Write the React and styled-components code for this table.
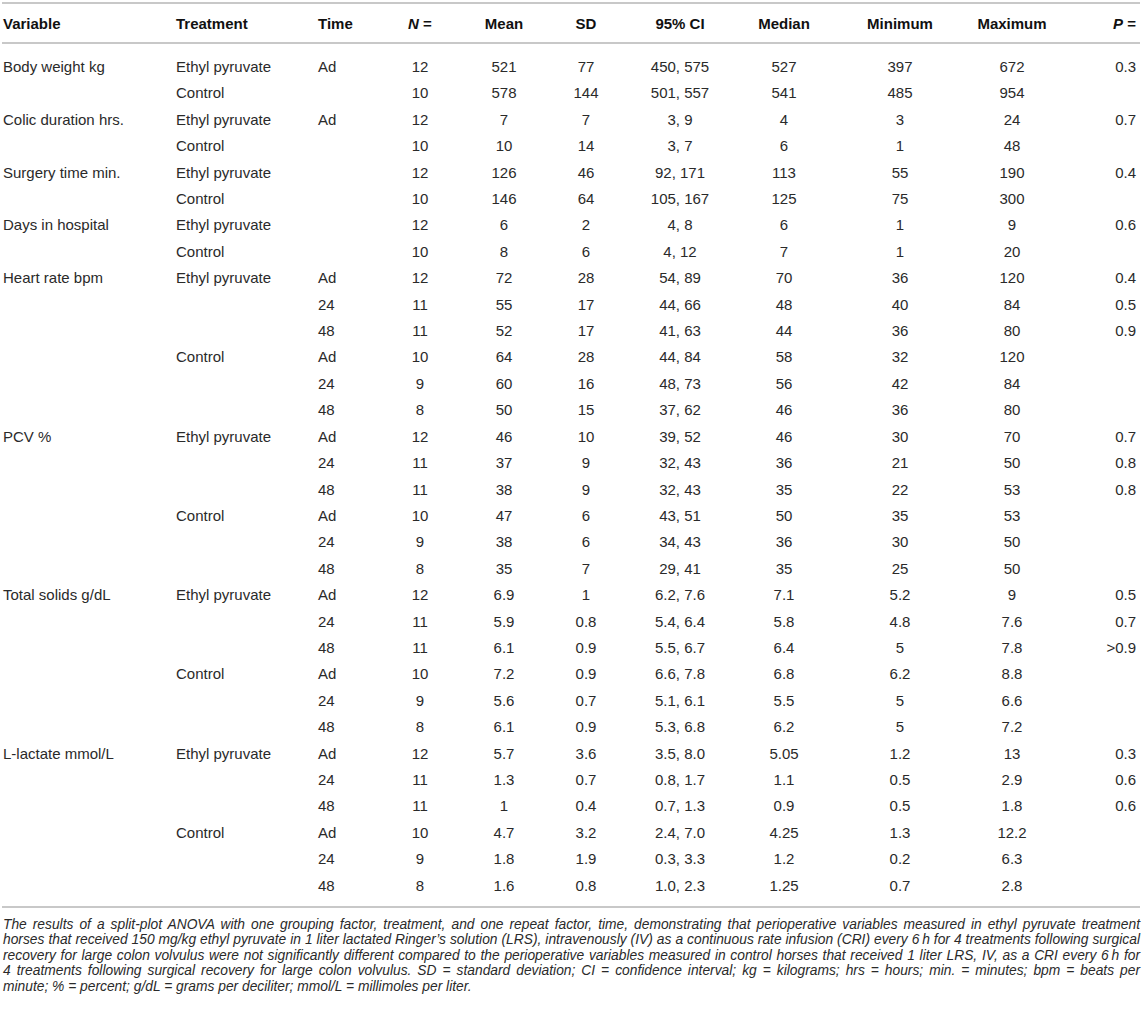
import React from 'react';
import styled, { createGlobalStyle } from 'styled-components';

const GlobalStyle = createGlobalStyle`
  html, body {
    margin: 0;
    padding: 0;
    background: #fff;
  }
`;

const Page = styled.div`
  width: 1138px;
  padding: 2px 0 0 2px;
  font-family: "Liberation Sans", Arial, sans-serif;
  color: #2a2a2a;
`;

const Table = styled.table`
  width: 1138px;
  border-collapse: collapse;
  table-layout: fixed;
  font-size: 15px;
`;

const HeadRow = styled.tr`
  border-top: 2px solid #c8c8c8;
  border-bottom: 2px solid #c8c8c8;
`;

const Th = styled.th`
  height: 38px;
  padding: 0 ${p => p.$pr || 0}px 0 ${p => p.$pl || 0}px;
  text-align: ${p => p.$align || 'center'};
  font-weight: bold;
  color: #111;
  white-space: nowrap;
`;

const Body = styled.tbody`
  border-bottom: 2px solid #c8c8c8;

  tr:first-child td {
    padding-top: 10px;
  }
  tr:last-child td {
    padding-bottom: 7px;
  }
`;

const Td = styled.td`
  line-height: 26.4px;
  padding: 0 ${p => p.$pr || 0}px 0 ${p => p.$pl || 0}px;
  text-align: ${p => p.$align || 'center'};
  white-space: nowrap;
  vertical-align: top;
`;

const Caption = styled.div`
  width: 1137px;
  padding: 9px 0 0 1px;
  font-size: 13.8px;
  line-height: 15.4px;
  font-style: italic;
  color: #2a2a2a;
`;

const CaptionLine = styled.div`
  text-align: left;
  text-align-last: ${p => (p.$justify ? 'justify' : 'left')};
`;

const cols = [
  { w: 172, align: 'left', pl: 1 },
  { w: 142, align: 'left', pl: 2 },
  { w: 54, align: 'left', pl: 2 },
  { w: 100 },
  { w: 68 },
  { w: 96 },
  { w: 92 },
  { w: 116 },
  { w: 116 },
  { w: 108 },
  { w: 74, align: 'right', pr: 4 },
];

const headers = [
  'Variable',
  'Treatment',
  'Time',
  <><i>N</i> =</>,
  'Mean',
  'SD',
  '95% CI',
  'Median',
  'Minimum',
  'Maximum',
  <><i>P</i> =</>,
];

const rows = [
  ['Body weight kg', 'Ethyl pyruvate', 'Ad', '12', '521', '77', '450, 575', '527', '397', '672', '0.3'],
  ['', 'Control', '', '10', '578', '144', '501, 557', '541', '485', '954', ''],
  ['Colic duration hrs.', 'Ethyl pyruvate', 'Ad', '12', '7', '7', '3, 9', '4', '3', '24', '0.7'],
  ['', 'Control', '', '10', '10', '14', '3, 7', '6', '1', '48', ''],
  ['Surgery time min.', 'Ethyl pyruvate', '', '12', '126', '46', '92, 171', '113', '55', '190', '0.4'],
  ['', 'Control', '', '10', '146', '64', '105, 167', '125', '75', '300', ''],
  ['Days in hospital', 'Ethyl pyruvate', '', '12', '6', '2', '4, 8', '6', '1', '9', '0.6'],
  ['', 'Control', '', '10', '8', '6', '4, 12', '7', '1', '20', ''],
  ['Heart rate bpm', 'Ethyl pyruvate', 'Ad', '12', '72', '28', '54, 89', '70', '36', '120', '0.4'],
  ['', '', '24', '11', '55', '17', '44, 66', '48', '40', '84', '0.5'],
  ['', '', '48', '11', '52', '17', '41, 63', '44', '36', '80', '0.9'],
  ['', 'Control', 'Ad', '10', '64', '28', '44, 84', '58', '32', '120', ''],
  ['', '', '24', '9', '60', '16', '48, 73', '56', '42', '84', ''],
  ['', '', '48', '8', '50', '15', '37, 62', '46', '36', '80', ''],
  ['PCV %', 'Ethyl pyruvate', 'Ad', '12', '46', '10', '39, 52', '46', '30', '70', '0.7'],
  ['', '', '24', '11', '37', '9', '32, 43', '36', '21', '50', '0.8'],
  ['', '', '48', '11', '38', '9', '32, 43', '35', '22', '53', '0.8'],
  ['', 'Control', 'Ad', '10', '47', '6', '43, 51', '50', '35', '53', ''],
  ['', '', '24', '9', '38', '6', '34, 43', '36', '30', '50', ''],
  ['', '', '48', '8', '35', '7', '29, 41', '35', '25', '50', ''],
  ['Total solids g/dL', 'Ethyl pyruvate', 'Ad', '12', '6.9', '1', '6.2, 7.6', '7.1', '5.2', '9', '0.5'],
  ['', '', '24', '11', '5.9', '0.8', '5.4, 6.4', '5.8', '4.8', '7.6', '0.7'],
  ['', '', '48', '11', '6.1', '0.9', '5.5, 6.7', '6.4', '5', '7.8', '>0.9'],
  ['', 'Control', 'Ad', '10', '7.2', '0.9', '6.6, 7.8', '6.8', '6.2', '8.8', ''],
  ['', '', '24', '9', '5.6', '0.7', '5.1, 6.1', '5.5', '5', '6.6', ''],
  ['', '', '48', '8', '6.1', '0.9', '5.3, 6.8', '6.2', '5', '7.2', ''],
  ['L-lactate mmol/L', 'Ethyl pyruvate', 'Ad', '12', '5.7', '3.6', '3.5, 8.0', '5.05', '1.2', '13', '0.3'],
  ['', '', '24', '11', '1.3', '0.7', '0.8, 1.7', '1.1', '0.5', '2.9', '0.6'],
  ['', '', '48', '11', '1', '0.4', '0.7, 1.3', '0.9', '0.5', '1.8', '0.6'],
  ['', 'Control', 'Ad', '10', '4.7', '3.2', '2.4, 7.0', '4.25', '1.3', '12.2', ''],
  ['', '', '24', '9', '1.8', '1.9', '0.3, 3.3', '1.2', '0.2', '6.3', ''],
  ['', '', '48', '8', '1.6', '0.8', '1.0, 2.3', '1.25', '0.7', '2.8', ''],
];

const captionLines = [
  'The results of a split-plot ANOVA with one grouping factor, treatment, and one repeat factor, time, demonstrating that perioperative variables measured in ethyl pyruvate treatment',
  'horses that received 150 mg/kg ethyl pyruvate in 1 liter lactated Ringer\u2019s solution (LRS), intravenously (IV) as a continuous rate infusion (CRI) every 6\u2009h for 4 treatments following surgical',
  'recovery for large colon volvulus were not significantly different compared to the perioperative variables measured in control horses that received 1 liter LRS, IV, as a CRI every 6\u2009h for',
  '4 treatments following surgical recovery for large colon volvulus. SD = standard deviation; CI = confidence interval; kg = kilograms; hrs = hours; min. = minutes; bpm = beats per',
  'minute; % = percent; g/dL = grams per deciliter; mmol/L = millimoles per liter.',
];

export default function App() {
  return (
    <Page>
      <GlobalStyle />
      <Table>
        <colgroup>
          {cols.map((c, i) => <col key={i} style={{ width: c.w }} />)}
        </colgroup>
        <thead>
          <HeadRow>
            {headers.map((h, i) => (
              <Th key={i} $align={cols[i].align} $pl={cols[i].pl} $pr={cols[i].pr}>{h}</Th>
            ))}
          </HeadRow>
        </thead>
        <Body>
          {rows.map((r, ri) => (
            <tr key={ri}>
              {r.map((v, i) => (
                <Td key={i} $align={cols[i].align} $pl={cols[i].pl} $pr={cols[i].pr}>{v}</Td>
              ))}
            </tr>
          ))}
        </Body>
      </Table>
      <Caption>
        {captionLines.map((l, i) => (
          <CaptionLine key={i} $justify={i < captionLines.length - 1}>{l}</CaptionLine>
        ))}
      </Caption>
    </Page>
  );
}
